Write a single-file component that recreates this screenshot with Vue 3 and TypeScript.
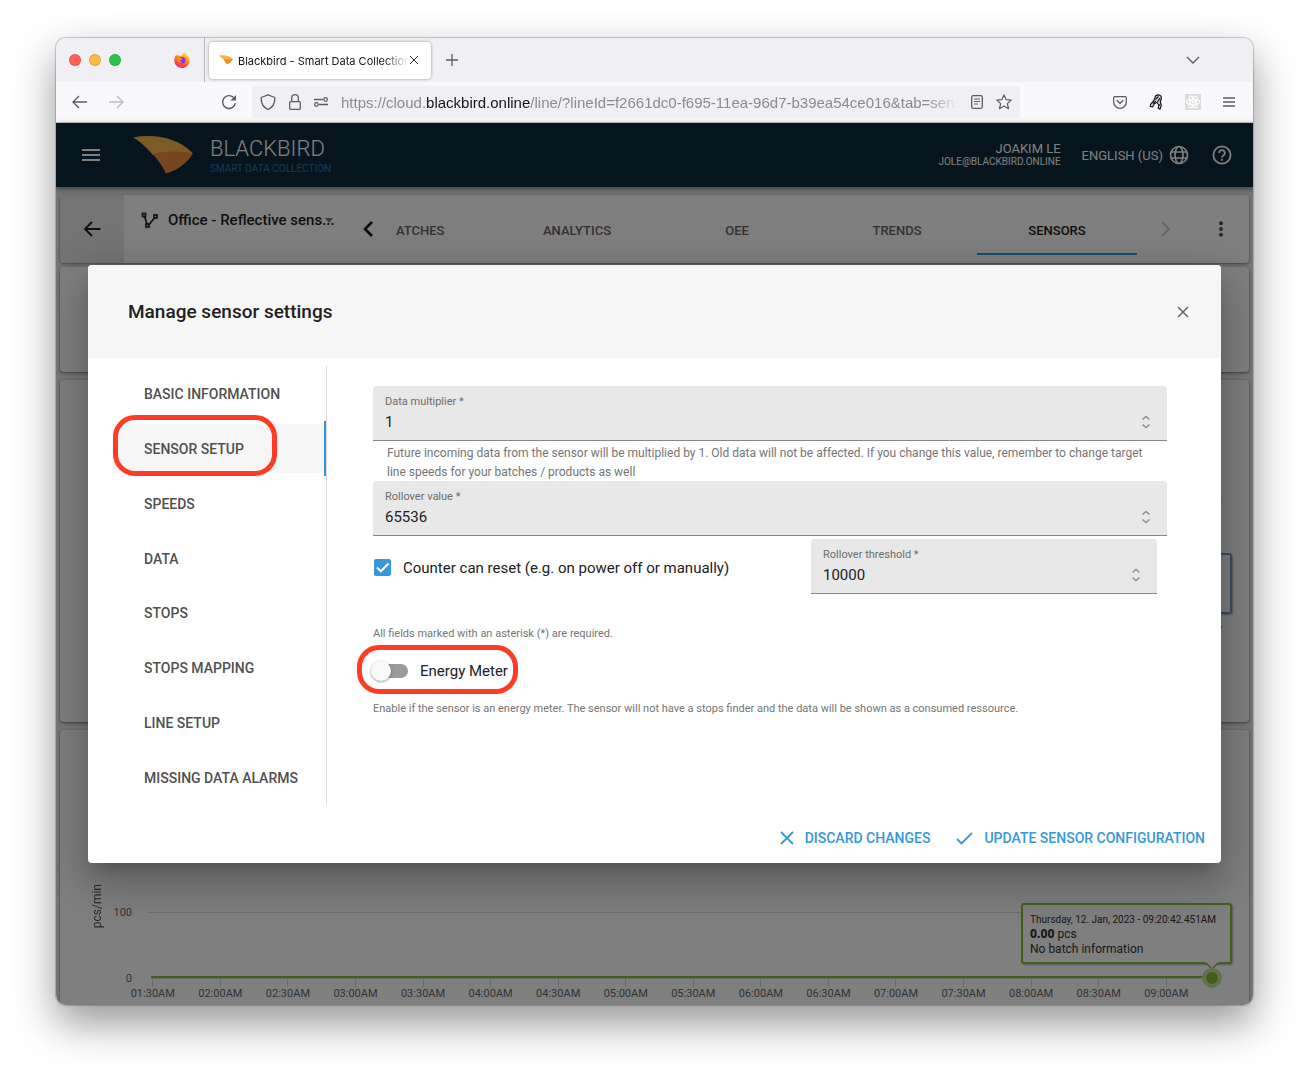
<script setup lang="ts">
import { ref } from 'vue'

const tabs = ['ANALYTICS', 'OEE', 'TRENDS', 'SENSORS']
const activeTab = ref('SENSORS')

const sections = [
  'BASIC INFORMATION',
  'SENSOR SETUP',
  'SPEEDS',
  'DATA',
  'STOPS',
  'STOPS MAPPING',
  'LINE SETUP',
  'MISSING DATA ALARMS',
]
const activeSection = ref('SENSOR SETUP')

const times = [
  '01:30AM', '02:00AM', '02:30AM', '03:00AM', '03:30AM', '04:00AM', '04:30AM', '05:00AM',
  '05:30AM', '06:00AM', '06:30AM', '07:00AM', '07:30AM', '08:00AM', '08:30AM', '09:00AM',
]

const multiplier = ref(1)
const rollover = ref(65536)
const threshold = ref(10000)
const canReset = ref(true)
const energyMeter = ref(false)
</script>

<template>
  <div class="desktop">
    <div class="window">
      <div class="tabstrip">
        <div class="lights"><i class="red"></i><i class="amber"></i><i class="green"></i></div>
        <div class="pinned">
          <svg width="16" height="16" viewBox="0 0 16 16">
            <defs>
              <linearGradient id="fox" x1="0.8" y1="0" x2="0.3" y2="1">
                <stop offset="0" stop-color="#fff04a" />
                <stop offset="0.4" stop-color="#ff9a1f" />
                <stop offset="0.75" stop-color="#ff4a3d" />
                <stop offset="1" stop-color="#e8249a" />
              </linearGradient>
            </defs>
            <path d="M11 0c0 1.500 1 2 2.300 3.200C15 4.800 16 6.700 15.700 9.200 15.200 13 12 16 8 16 3.700 16 .3 12.700.3 8.500.3 6 1.300 3.700 2.500 2.300L3 4l1.500-.9L6 4l2-.4C8.500 2 10 1 11 0z" fill="url(#fox)" />
            <circle cx="8.200" cy="8.200" r="3.300" fill="#7a3be0" />
            <path d="M2.800 5.500c2-.8 3.500 0 4 .8l2 .3c-.3 1.300-2.300 1-2.500 2.200-.1.900 1 1.500 2.400 1-1.500 1.700-4.700 1.200-5.600-1z" fill="#ff8a1e" />
          </svg>
        </div>
        <div class="tab">
          <svg width="14" height="10" viewBox="0 0 14 10">
            <path d="M0 .5C5-.4 11 .8 14 4.300L5 5z" fill="#fbb040" />
            <path d="M4.600 4.700C8 3.900 12 4 14 4.300 12.500 7 10.500 8.500 7.700 9.500z" fill="#f58a2c" />
          </svg>
          <span class="tab-title">Blackbird - Smart Data Collection</span>
          <button class="plain" aria-label="Close tab">
            <svg width="10" height="10" viewBox="0 0 10 10"><path d="M1 1l8 8M9 1L1 9" stroke="#222" fill="none" /></svg>
          </button>
        </div>
        <button class="plain new-tab" aria-label="New tab">
          <svg width="12" height="12" viewBox="0 0 12 12"><path d="M6 0v12M0 6h12" stroke="#5b5b66" stroke-width="1.300" /></svg>
        </button>
        <button class="plain all-tabs" aria-label="List all tabs">
          <svg width="14" height="8" viewBox="0 0 14 8"><path d="M1 1l6 6 6-6" stroke="#5b5b66" stroke-width="1.300" fill="none" /></svg>
        </button>
      </div>

      <div class="toolbar">
        <div class="history">
          <button class="plain" aria-label="Back">
            <svg width="16" height="14" viewBox="0 0 16 14"><path d="M15 7H1.500M7 1L1 7l6 6" stroke="#5b5b66" stroke-width="1.400" fill="none" /></svg>
          </button>
          <button class="plain" aria-label="Forward">
            <svg width="16" height="14" viewBox="0 0 16 14"><path d="M1 7h13.500M9 1l6 6-6 6" stroke="#bdbdc2" stroke-width="1.400" fill="none" /></svg>
          </button>
        </div>
        <button class="plain" aria-label="Reload">
          <svg width="16" height="16" viewBox="0 0 16 16">
            <path d="M14.300 9A6.400 6.400 0 1 1 12.500 3.500" stroke="#5b5b66" stroke-width="1.400" fill="none" />
            <path d="M15 1v5.500H9.500z" fill="#5b5b66" />
          </svg>
        </button>
        <div class="urlbar">
          <svg width="16" height="16" viewBox="0 0 16 16"><path d="M8 .8l6.800 2.700c.3 5-1.300 9.500-6.800 12C2.500 13 .9 8.500 1.200 3.500z" stroke="#5b5b66" stroke-width="1.300" stroke-linejoin="round" fill="none" /></svg>
          <svg width="12" height="16" viewBox="0 0 12 16"><path d="M1.700 7.700h8.600a1 1 0 0 1 1 1v5.600a1 1 0 0 1-1 1H1.700a1 1 0 0 1-1-1V8.700a1 1 0 0 1 1-1zM2.700 7.500V4a3.300 3.300 0 0 1 6.600 0v3.500" stroke="#5b5b66" stroke-width="1.300" fill="none" /></svg>
          <svg width="14" height="10" viewBox="0 0 14 10"><path d="M0 2.500h9M5 7.500h9" stroke="#5b5b66" stroke-width="1.300" /><circle cx="11.600" cy="2.500" r="1.800" stroke="#5b5b66" stroke-width="1.200" fill="none" /><circle cx="2.400" cy="7.500" r="1.800" stroke="#5b5b66" stroke-width="1.200" fill="none" /></svg>
          <span class="url">https://cloud.<b>blackbird.online</b>/line/?lineId=f2661dc0-f695-11ea-96d7-b39ea54ce016&amp;tab=sens</span>
          <button class="plain" aria-label="Reader view">
            <svg width="12" height="14" viewBox="0 0 12 14"><rect x="0.700" y="0.700" width="10.600" height="12.600" rx="1.500" stroke="#5b5b66" stroke-width="1.300" fill="none" /><path d="M3 4h6M3 6.500h6M3 9h4" stroke="#5b5b66" stroke-width="1.200" /></svg>
          </button>
          <button class="plain" aria-label="Bookmark">
            <svg width="16" height="16" viewBox="0 0 16 16"><path d="M8 .9l2.100 4.700 5.100.5-3.800 3.500 1.100 5.100L8 12.100l-4.500 2.600 1.100-5.100L.8 6.100l5.100-.5z" stroke="#5b5b66" stroke-width="1.200" stroke-linejoin="round" fill="none" /></svg>
          </button>
        </div>
        <div class="extensions">
          <button class="plain" aria-label="Pocket">
            <svg width="14" height="13" viewBox="0 0 14 13"><path d="M2 .7h10a1.300 1.300 0 0 1 1.300 1.300v4a6.300 6.300 0 0 1-12.600 0V2A1.300 1.300 0 0 1 2 .7z" stroke="#5b5b66" stroke-width="1.300" fill="none" /><path d="M3.700 4.300L7 7.500l3.300-3.200" stroke="#5b5b66" stroke-width="1.300" fill="none" /></svg>
          </button>
          <button class="plain" aria-label="Extension">
            <svg width="14" height="16" viewBox="0 0 14 16" fill="none" stroke="#15141a" stroke-width="1.200" stroke-linejoin="round"><path d="M6 4C6 1.800 7.500.8 9.300.8 11.500.9 12.600 2.500 12.300 4.500L11.300 8l.9 3.500-1.200 3.800-1.800-1 .6-3.300L8 8.500 5.500 9.500 3.500 13l-2.300-.6.4-2L4.500 7z" fill="#ddd" /><path d="M6.500 5.500l3-3M8.500 8l2.500-4M4 9.500l3-2.500M10 10v2" /></svg>
          </button>
          <button class="plain" aria-label="React tools">
            <svg width="16" height="16" viewBox="0 0 16 16"><rect width="16" height="16" fill="#dcdcdc" /><g stroke="#fff" stroke-width="1.100" fill="none"><ellipse cx="8" cy="8" rx="6.500" ry="2.600" /><ellipse cx="8" cy="8" rx="6.500" ry="2.600" transform="rotate(60 8 8)" /><ellipse cx="8" cy="8" rx="6.500" ry="2.600" transform="rotate(120 8 8)" /></g><circle cx="8" cy="8" r="1.400" fill="#fff" /></svg>
          </button>
          <button class="plain" aria-label="Menu">
            <svg width="12" height="10" viewBox="0 0 12 10"><path d="M0 1h12M0 5h12M0 9h12" stroke="#5b5b66" stroke-width="1.300" /></svg>
          </button>
        </div>
      </div>

      <div class="app">
        <div class="page">
          <header class="masthead">
            <button class="plain" aria-label="Open navigation">
              <svg width="18" height="12" viewBox="0 0 18 12"><path d="M0 1h18M0 6h18M0 11h18" stroke="#fff" stroke-width="2" /></svg>
            </button>
            <svg class="logo" width="60" height="38" viewBox="0 0 60 38">
              <path d="M0 1.500C22-2.500 45 2 60 17.500L20 19C14 12 7 5 0 1.500z" fill="#f9b64a" />
              <path d="M19.500 18C32 14.500 50 15 60 17.500 54 27 45 34 33 37.500 29 30 25 23.500 19.500 18z" fill="#f08c3c" />
            </svg>
            <div class="brand">
              <span class="brand-name">BLACKBIRD</span>
              <span class="brand-sub">SMART DATA COLLECTION</span>
            </div>
            <div class="user">
              <span>JOAKIM LE</span>
              <small>JOLE@BLACKBIRD.ONLINE</small>
            </div>
            <button class="plain language">
              ENGLISH (US)
              <svg width="20" height="20" viewBox="0 0 20 20" fill="none" stroke="#fff" stroke-width="1.700"><circle cx="10" cy="10" r="8.500" /><ellipse cx="10" cy="10" rx="4" ry="8.500" /><path d="M2 7h16M2 13h16" /></svg>
            </button>
            <button class="plain" aria-label="Help">
              <svg width="20" height="20" viewBox="0 0 20 20" fill="none" stroke="#fff" stroke-width="1.800"><circle cx="10" cy="10" r="8.600" /><path d="M7.200 8a2.800 2.800 0 1 1 4.600 2.100C10.700 11 10 11.400 10 12.600M10 13.800v1.900" /></svg>
            </button>
          </header>

          <main class="cards">
            <div class="card linebar">
              <button class="plain back" aria-label="Back to lines">
                <svg width="18" height="16" viewBox="0 0 18 16"><path d="M17.500 8H2M9 1L2 8l7 7" stroke="#222" stroke-width="2" fill="none" /></svg>
              </button>
              <button class="plain line">
                <svg width="18" height="17" viewBox="0 0 18 17" fill="none" stroke="#222" stroke-width="1.700"><rect x="1.500" y="1.500" width="3" height="3" /><rect x="13" y="3" width="3" height="3" /><rect x="5" y="12" width="3" height="3" /><path d="M3.500 4.500L6 12M8 12.500L13.500 6" /></svg>
                <span>Office - Reflective sens...</span>
                <svg class="caret" width="8" height="5" viewBox="0 0 8 5"><path d="M0 0h8L4 5z" fill="#777" /></svg>
              </button>
              <button class="plain scroll" aria-label="Scroll left">
                <svg width="10" height="16" viewBox="0 0 10 16"><path d="M9 1L2 8l7 7" stroke="#111" stroke-width="2.600" fill="none" /></svg>
              </button>
              <nav class="tabs">
                <button class="plain first">ATCHES</button>
                <button v-for="t in tabs" :key="t" class="plain" :class="{ active: t === activeTab }" @click="activeTab = t">{{ t }}</button>
              </nav>
              <button class="plain scroll" aria-label="Scroll right">
                <svg width="10" height="16" viewBox="0 0 10 16"><path d="M2 1l7 7-7 7" stroke="#cfcfcf" stroke-width="2" fill="none" /></svg>
              </button>
              <button class="plain scroll" aria-label="More">
                <svg width="4" height="16" viewBox="0 0 4 16" fill="#555"><circle cx="2" cy="2.200" r="2" /><circle cx="2" cy="8" r="2" /><circle cx="2" cy="13.800" r="2" /></svg>
              </button>
            </div>
            <div class="card summary"></div>
            <div class="card chart-card upper">
              <div class="plot blue">
                <div class="gridrow"></div>
                <div class="gridrow"></div>
                <div class="series"></div>
                <div class="bubble"></div>
              </div>
            </div>
            <div class="card chart-card lower">
              <div class="plot">
                <span class="axis-title">pcs/min</span>
                <div class="gridrow"></div>
                <div class="gridrow"><span>100</span></div>
                <div class="series"><span>0</span></div>
                <div class="bubble">
                  <small>Thursday, 12. Jan, 2023 - 09:20:42.451AM</small>
                  <span><b>0.00</b> pcs</span>
                  <span>No batch information</span>
                  <svg class="pointer" width="14" height="8" viewBox="0 0 14 8"><path d="M0 0h14L7 7z" fill="#fff" /><path d="M1 1l6 6 6-6" stroke="#86bf2e" stroke-width="1.500" fill="none" /></svg>
                </div>
                <i class="marker"></i>
              </div>
              <div class="times"><span v-for="t in times" :key="t">{{ t }}</span></div>
            </div>
          </main>
        </div>

        <div class="backdrop">
          <section class="dialog" role="dialog" aria-label="Manage sensor settings">
            <header class="dialog-head">
              <h2>Manage sensor settings</h2>
              <button class="plain" aria-label="Close">
                <svg width="12" height="12" viewBox="0 0 12 12"><path d="M1 1l10 10M11 1L1 11" stroke="#666" stroke-width="1.500" /></svg>
              </button>
            </header>
            <div class="dialog-body">
              <nav class="sections">
                <button v-for="s in sections" :key="s" class="plain" :class="{ active: s === activeSection }" @click="activeSection = s">
                  <span>{{ s }}</span>
                  <i v-if="s === 'SENSOR SETUP'" class="ring"></i>
                </button>
              </nav>
              <form class="form" @submit.prevent>
                <div class="field">
                  <label for="multiplier">Data multiplier *</label>
                  <input id="multiplier" v-model="multiplier" type="number" />
                  <svg class="spin" width="10" height="14" viewBox="0 0 10 14"><path d="M1.500 4.500L5 1.500l3.500 3M1.500 9.500L5 12.500l3.500-3" stroke="#8f8f9d" stroke-width="1.600" fill="none" /></svg>
                </div>
                <p class="hint">Future incoming data from the sensor will be multiplied by 1. Old data will not be affected. If you change this value, remember to change target<br />line speeds for your batches / products as well</p>
                <div class="field">
                  <label for="rollover">Rollover value *</label>
                  <input id="rollover" v-model="rollover" type="number" />
                  <svg class="spin" width="10" height="14" viewBox="0 0 10 14"><path d="M1.500 4.500L5 1.500l3.500 3M1.500 9.500L5 12.500l3.500-3" stroke="#8f8f9d" stroke-width="1.600" fill="none" /></svg>
                </div>
                <div class="reset-row">
                  <label class="check">
                    <span class="tick">
                      <input v-model="canReset" type="checkbox" />
                      <svg v-if="canReset" width="17" height="17" viewBox="0 0 17 17"><path d="M3 8.500l3.800 3.800L14.500 4.500" stroke="#fff" stroke-width="2" fill="none" /></svg>
                    </span>
                    Counter can reset (e.g. on power off or manually)
                  </label>
                  <div class="field">
                    <label for="threshold">Rollover threshold *</label>
                    <input id="threshold" v-model="threshold" type="number" />
                    <svg class="spin" width="10" height="14" viewBox="0 0 10 14"><path d="M1.500 4.500L5 1.500l3.500 3M1.500 9.500L5 12.500l3.500-3" stroke="#8f8f9d" stroke-width="1.600" fill="none" /></svg>
                  </div>
                </div>
                <p class="note required">All fields marked with an asterisk (*) are required.</p>
                <label class="toggle">
                  <input v-model="energyMeter" type="checkbox" role="switch" />
                  Energy Meter
                  <i class="ring"></i>
                </label>
                <p class="note">Enable if the sensor is an energy meter. The sensor will not have a stops finder and the data will be shown as a consumed ressource.</p>
              </form>
            </div>
            <footer class="dialog-foot">
              <button class="plain">
                <svg width="14" height="14" viewBox="0 0 14 14"><path d="M1 1l12 12M13 1L1 13" stroke="#3498db" stroke-width="1.800" /></svg>
                DISCARD CHANGES
              </button>
              <button class="plain">
                <svg width="17" height="14" viewBox="0 0 17 14"><path d="M1 8l4.500 4.500L16 2" stroke="#3498db" stroke-width="1.800" fill="none" /></svg>
                UPDATE SENSOR CONFIGURATION
              </button>
            </footer>
          </section>
        </div>
      </div>
    </div>
  </div>
</template>

<style>
body {
  background: #fff;
}
</style>

<style scoped>
* {
  box-sizing: border-box;
}
.desktop {
  padding: 38px 56px 74px;
  font-family: Roboto, sans-serif;
  color: #212121;
  overflow: hidden;
}
.plain {
  display: flex;
  align-items: center;
  justify-content: center;
  padding: 0;
  border: 0;
  background: none;
  color: inherit;
  font: inherit;
  cursor: pointer;
}
.plain svg,
.urlbar svg {
  flex: none;
}
.window {
  border-radius: 10px;
  overflow: hidden;
  box-shadow: 0 0 1px 1px rgba(0, 0, 0, 0.2), 0 18px 42px rgba(0, 0, 0, 0.42);
}

/* Browser chrome */
.tabstrip {
  display: flex;
  align-items: center;
  height: 44px;
  background: #f0eff4;
  font: 11px Inter, sans-serif;
  color: #15141a;
}
.lights {
  display: flex;
  gap: 8px;
  padding-left: 13px;
}
.lights i {
  width: 12px;
  height: 12px;
  border-radius: 50%;
  border: 1px solid rgba(0, 0, 0, 0.12);
}
.red { background: #ff6159; }
.amber { background: #febc40; }
.green { background: #24c74b; }
.pinned {
  display: flex;
  align-items: center;
  height: 100%;
  margin-left: 53px;
  padding-right: 14px;
  border-right: 1px solid #b5b5bb;
}
.tab {
  display: flex;
  align-items: center;
  width: 222px;
  height: 37px;
  margin-left: 4px;
  padding: 0 12px 0 10px;
  border-radius: 4px;
  background: #fff;
  box-shadow: 0 0 3px rgba(0, 0, 0, 0.4);
}
.tab-title {
  flex: 1;
  margin-left: 5px;
  padding-top: 1px;
  overflow: hidden;
  white-space: nowrap;
  mask-image: linear-gradient(to right, #000 85%, transparent);
}
.new-tab {
  margin-left: 15px;
}
.all-tabs {
  margin: 0 53px 0 auto;
}
.toolbar {
  display: flex;
  align-items: center;
  height: 41px;
  padding: 0 18px 0 16px;
  background: #f9f9fb;
  border-bottom: 1px solid #ccc;
}
.history {
  display: flex;
  gap: 20px;
  margin-right: 97px;
}
.urlbar {
  display: flex;
  align-items: center;
  flex: 1;
  min-width: 0;
  gap: 13px;
  height: 32px;
  margin-left: 15px;
  padding: 0 8px;
  border-radius: 4px;
  background: #f0f0f4;
}
.url {
  flex: 1;
  overflow: hidden;
  white-space: nowrap;
  font: 15px "Liberation Sans", sans-serif;
  color: #8a8a90;
  mask-image: linear-gradient(to right, #000 95%, transparent);
}
.url b {
  font-weight: 400;
  color: #15141a;
}
.extensions {
  display: flex;
  align-items: center;
  gap: 22px;
  margin-left: 93px;
}

/* Application page and the layer over it share one grid cell */
.app {
  display: grid;
}
.page,
.backdrop {
  grid-area: 1 / 1;
  min-width: 0;
}
.page {
  background: #eaf0ee;
}
.masthead {
  position: relative;
  display: flex;
  align-items: center;
  height: 64px;
  padding: 0 21px 0 26px;
  background: #0d2a3b;
  box-shadow: 0 2px 6px rgba(0, 0, 0, 0.5);
  color: #fff;
  font-size: 13px;
}
.logo {
  margin-left: 33px;
}
.brand {
  display: flex;
  flex-direction: column;
  margin-left: 17px;
}
.brand-name {
  font-size: 22px;
  line-height: 28px;
  font-weight: 300;
}
.brand-sub {
  font-size: 10px;
  line-height: 12px;
  color: #2376a3;
}
.user {
  display: flex;
  flex-direction: column;
  align-items: flex-end;
  margin-left: auto;
  line-height: 14px;
}
.user small {
  font-size: 10px;
  line-height: 12px;
}
.language {
  gap: 6px;
  margin: 0 23px 0 21px;
}
.cards {
  padding: 8px 4px 0;
}
.card {
  border-radius: 4px;
  background: #fff;
  box-shadow: 0 1px 3px rgba(0, 0, 0, 0.5);
}
.linebar {
  display: flex;
  align-items: center;
  height: 68px;
  overflow: hidden;
  font-size: 13px;
  font-weight: 500;
  color: #666;
}
.back {
  width: 64px;
  height: 100%;
  background: #e8e8e8;
}
.line {
  gap: 9px;
  align-self: flex-start;
  width: 216px;
  height: 50px;
  padding-left: 17px;
  justify-content: flex-start;
  font-size: 15px;
  color: #222;
  white-space: nowrap;
  position: relative;
}
.caret {
  position: absolute;
  right: 7px;
}
.scroll {
  width: 56px;
}
.tabs {
  display: flex;
  flex: 1;
  align-self: flex-start;
  height: 60px;
  min-width: 0;
}
.tabs .plain {
  width: 160px;
  padding-top: 12px;
  border-bottom: 2px solid transparent;
}
.tabs .first {
  flex: 1;
  width: auto;
  justify-content: flex-start;
}
.tabs .active {
  color: #1a1a1a;
  border-color: #3498db;
}
.summary {
  height: 105px;
  margin-top: 4px;
}
.chart-card {
  margin-top: 8px;
  padding: 50px 27px 0 88px;
}
.upper {
  height: 342px;
}
.lower {
  height: 275px;
  border-radius: 4px 4px 0 0;
}
.plot {
  position: relative;
  padding-top: 66px;
}
.gridrow {
  height: 66px;
  border-top: 1px solid #dcdfe3;
}
.series {
  height: 3px;
  margin-top: -2px;
  margin-left: 3px;
  background: #86bf2e;
  border-bottom: 1px solid #ccd6eb;
}
.blue .series {
  background: #5c8fd6;
}
.gridrow span,
.series span {
  position: absolute;
  left: -56px;
  width: 40px;
  margin-top: -7px;
  text-align: right;
  font-size: 11px;
  line-height: 14px;
  color: #666;
}
.series span {
  margin-top: -4px;
}
.axis-title {
  position: absolute;
  left: -58px;
  bottom: 51px;
  writing-mode: vertical-rl;
  transform: rotate(180deg);
  font-size: 12px;
  line-height: 14px;
  color: #555;
}
.bubble {
  position: absolute;
  right: -10px;
  bottom: 15px;
  display: flex;
  flex-direction: column;
  width: 211px;
  height: 61px;
  padding: 7px 0 0 7px;
  border: 2px solid #86bf2e;
  border-radius: 3px;
  background: #fff;
  box-shadow: 1px 1px 2px rgba(0, 0, 0, 0.3);
  font-size: 12px;
  line-height: 15px;
  color: #333;
  white-space: nowrap;
}
.bubble small {
  font-size: 10px;
}
.bubble b {
  font-weight: 900;
}
.blue .bubble {
  border-color: #7a9cbc;
}
.pointer {
  position: absolute;
  right: 11px;
  bottom: -8px;
}
.marker {
  position: absolute;
  right: 0;
  bottom: -9px;
  width: 20px;
  height: 20px;
  border: 4px solid #c8e29c;
  border-radius: 50%;
  background: #86bf2e;
}
.times {
  display: grid;
  grid-template-columns: repeat(16, 1fr);
  margin: 0 22px 0 -29px;
  text-align: center;
  font-size: 11px;
  line-height: 14px;
  color: #666;
}
.times span::before {
  content: '';
  display: block;
  width: 1px;
  height: 8px;
  margin: 0 auto;
  background: #ccd6eb;
}

/* Settings dialog */
.backdrop {
  position: relative;
  padding: 142px 32px;
  background: rgba(0, 0, 0, 0.5);
}
.dialog {
  border-radius: 4px;
  background: #fff;
  box-shadow: 0 11px 15px -7px rgba(0, 0, 0, 0.2), 0 24px 38px 3px rgba(0, 0, 0, 0.14), 0 9px 46px 8px rgba(0, 0, 0, 0.12);
}
.dialog-head {
  display: flex;
  align-items: center;
  justify-content: space-between;
  height: 93px;
  padding: 0 32px 0 40px;
  border-radius: 4px 4px 0 0;
  background: #f6f6f6;
}
h2 {
  margin: 0;
  font-size: 19px;
  font-weight: 500;
}
.dialog-body {
  display: flex;
  padding: 8px 54px 0 24px;
}
.sections {
  display: grid;
  grid-auto-rows: 1fr;
  flex: none;
  width: 215px;
  height: 438px;
  border-right: 1px solid #dcdcdc;
  font-size: 14px;
  font-weight: 500;
  color: #505050;
}
.sections .plain {
  position: relative;
  align-items: stretch;
  padding: 3px 0;
}
.sections .plain > span {
  display: flex;
  flex: 1;
  align-items: center;
  padding: 2px 0 0 32px;
}
.sections .active {
  border-right: 2px solid #3498db;
}
.sections .active > span {
  background: #f6f6f6;
}
.ring {
  position: absolute;
  border: 5px solid #ff3b24;
  border-radius: 22px;
}
.sections .ring {
  top: -6px;
  left: 1px;
  width: 164px;
  height: 61px;
}
.form {
  flex: 1;
  min-width: 0;
  margin-left: 46px;
  padding-top: 20px;
}
.field {
  position: relative;
  display: flex;
  flex-direction: column;
  height: 55px;
  padding: 9px 12px 0;
  border-bottom: 1px solid #868686;
  border-radius: 4px 4px 0 0;
  background: #e8e8e8;
}
.field label {
  font-size: 11px;
  line-height: 14px;
  color: #6d6d6d;
}
.field input {
  width: 100%;
  height: 26px;
  padding: 0;
  border: 0;
  outline: 0;
  background: none;
  font: 15px Roboto, sans-serif;
  color: #212121;
  appearance: textfield;
}
.field input::-webkit-inner-spin-button {
  appearance: none;
}
.spin {
  position: absolute;
  right: 16px;
  bottom: 11px;
}
.hint {
  height: 40px;
  margin: 0 0 0 14px;
  padding-top: 3px;
  font-size: 12px;
  line-height: 19px;
  color: #757575;
}
.reset-row {
  display: flex;
  align-items: center;
  justify-content: space-between;
  margin-top: 3px;
  padding-right: 10px;
}
.reset-row .field {
  width: 346px;
}
.check {
  display: flex;
  align-items: center;
  gap: 12px;
  padding: 2px 0 0 1px;
  font-size: 15px;
}
.tick {
  display: grid;
}
.tick > * {
  grid-area: 1 / 1;
}
.tick svg {
  pointer-events: none;
}
.tick input {
  width: 17px;
  height: 17px;
  margin: 0;
  border: 2px solid #757575;
  border-radius: 2px;
  appearance: none;
}
.tick input:checked {
  border-color: #3498db;
  background: #3498db;
}
.note {
  margin: 0;
  font-size: 11px;
  line-height: 16px;
  color: #757575;
}
.required {
  margin-top: 32px;
}
.toggle {
  position: relative;
  display: flex;
  align-items: center;
  gap: 12px;
  width: max-content;
  height: 20px;
  margin: 19px 0 20px;
  font-size: 15px;
}
.toggle input {
  display: flex;
  align-items: center;
  width: 35px;
  height: 14px;
  margin: 0;
  border-radius: 7px;
  background: #9b9b9b;
  appearance: none;
}
.toggle input::before {
  content: '';
  width: 20px;
  height: 20px;
  margin-left: -2px;
  flex: none;
  border-radius: 50%;
  background: #fafafa;
  box-shadow: 0 1px 3px rgba(0, 0, 0, 0.4);
}
.toggle input:checked {
  justify-content: flex-end;
}
.toggle .ring {
  top: -16px;
  left: -16px;
  width: 161px;
  height: 49px;
}
.dialog-foot {
  display: flex;
  justify-content: flex-end;
  gap: 26px;
  height: 59px;
  padding: 8px 16px 0 0;
  font-size: 14px;
  font-weight: 500;
  color: #3498db;
}
.dialog-foot .plain {
  gap: 11px;
}
</style>
